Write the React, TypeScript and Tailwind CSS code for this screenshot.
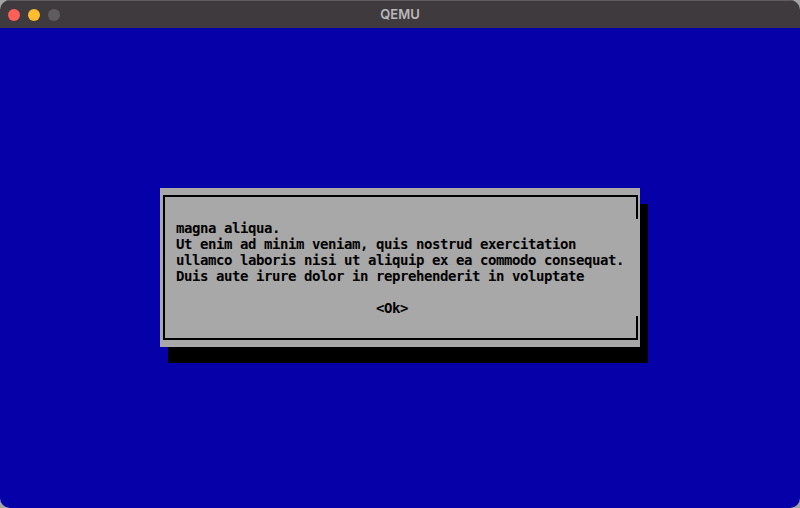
import React from "react";

const lines = [
  "magna aliqua.",
  "Ut enim ad minim veniam, quis nostrud exercitation",
  "ullamco laboris nisi ut aliquip ex ea commodo consequat.",
  "Duis aute irure dolor in reprehenderit in voluptate",
];

function TitleBar() {
  return (
    <div className="relative flex h-[28px] shrink-0 items-center bg-[#3e3a3e] border-t border-[#5e5a5e]">
      <div className="flex items-center gap-[8px] pl-[8px]">
        <span className="block h-[12px] w-[12px] rounded-full bg-[#fe5f57]" />
        <span className="block h-[12px] w-[12px] rounded-full bg-[#febc2e]" />
        <span className="block h-[12px] w-[12px] rounded-full bg-[#5f5c60]" />
      </div>
      <div className="absolute inset-0 flex items-center justify-center pointer-events-none">
        <span className="font-['Inter',sans-serif] text-[13px] font-semibold text-[#bbb8bb]">
          QEMU
        </span>
      </div>
    </div>
  );
}

function MessageBox() {
  return (
    <div className="w-[480px] h-[159px] bg-[#a8a8a8] shadow-[8px_16px_0_0_#000] pl-[3px] pr-[2px] pt-[7px] pb-[7px] flex">
      <div className="flex flex-1">
        <div className="flex-1 border-l-2 border-t-2 border-b-2 border-black pl-[11px] pt-[23px]">
          <div className="font-['DejaVu_Sans_Mono',monospace] text-[14px] tracking-[-0.43px] leading-[16px] font-bold text-black whitespace-pre">
            {lines.map((l) => (
              <div key={l}>{l}</div>
            ))}
            <div>&nbsp;</div>
            <div className="pl-[200px]">&lt;Ok&gt;</div>
          </div>
        </div>
        <div className="flex w-[2px] flex-col">
          <div className="h-[24px] bg-black" />
          <div className="flex-1" />
          <div className="h-[24px] bg-black" />
        </div>
      </div>
    </div>
  );
}

export default function App() {
  return (
    <div className="w-[800px] h-[508px] bg-[#a4a4a4]">
      <div className="flex h-full w-full flex-col overflow-hidden rounded-[10px]">
        <TitleBar />
        <div className="flex-1 bg-[#0600a8] pl-[160px] pt-[160px]">
          <MessageBox />
        </div>
      </div>
    </div>
  );
}
